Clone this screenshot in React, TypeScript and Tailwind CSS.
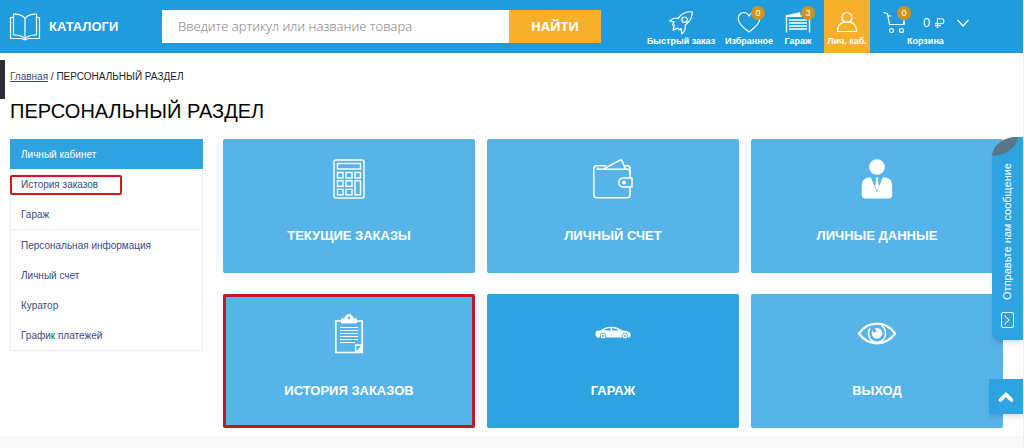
import React from 'react';

const font = "font-['Liberation_Sans',Arial,sans-serif]";

function BookIcon() {
  return (
    <svg className="w-8 h-7 shrink-0" viewBox="0 0 32 28" fill="none" stroke="currentColor" strokeWidth={1.2} strokeLinejoin="round">
      <path d="M16 5.5C13.5 2 9.5 1 4.5 1.2V22c5-.2 9 .8 11.5 3.8C18.5 22.8 22.5 21.8 27.5 22V1.2C22.5 1 18.5 2 16 5.5z" />
      <path d="M16 5.5V25.500" />
      <path d="M4.500 4.500H1.500V25.500h10c2 0 2.800.2 3.200 1.200h2.600c.4-1 1.200-1.200 3.200-1.200h10V4.500h-3" />
    </svg>
  );
}

function RocketIcon() {
  return (
    <svg className="w-6 h-6" viewBox="0 0 24 24" fill="none" stroke="currentColor" strokeWidth={1.2} strokeLinejoin="round">
      <path d="M23.300.8c-5.500-.4-9.600 1-12.600 4.700L9.300 7.300C6.400 6.600 3 7.500.8 10l4.400.8-1.700 3 1.800.3-1.200 5 4.600-2 1.500 1.700 2-1.200.6 5.300c2.700-2.200 3.900-5.300 3.400-8.600l2.300-2.300C21.600 9.200 23.300 5.600 23.300.8z" />
      <circle cx="15.5" cy="8.7" r="2.700" />
    </svg>
  );
}

function HeartIcon() {
  return (
    <svg className="w-6 h-6" viewBox="0 0 24 24" fill="none" stroke="currentColor" strokeWidth={1.2} strokeLinejoin="round">
      <path d="M12 21C7.500 17.800 1.500 13 1.200 7.800 1 4.200 3.500 1.500 6.700 1.500c2.300 0 4.200 1.300 5.300 3.500 1.100-2.200 3-3.500 5.300-3.500 3.200 0 5.700 2.700 5.500 6.300C22.500 13 16.500 17.800 12 21z" />
    </svg>
  );
}

function GarageIcon() {
  return (
    <svg className="w-[26px] h-6" viewBox="0 0 26 24" fill="none" stroke="currentColor">
      <path d="M1.500 21.500V5h23v16.500" strokeWidth={1.4} />
      <path d="M1 4.500 15 1.500V5.500H1z" fill="currentColor" strokeWidth={0.5} />
      <path d="M4 9h18M4 12h18M4 15h18M4 18h18" strokeWidth={1.5} />
    </svg>
  );
}

function UserIcon() {
  return (
    <svg className="w-6 h-6" viewBox="0 0 24 24" fill="none" stroke="currentColor" strokeWidth={1.2} strokeLinejoin="round">
      <circle cx="12" cy="6.5" r="5" />
      <path d="M2.500 20.500c0-5 2.700-8.300 6.200-9.300h6.600c3.500 1 6.200 4.300 6.200 9.300z" />
    </svg>
  );
}

function CartIcon() {
  return (
    <svg className="w-6 h-6" viewBox="0 0 24 24" fill="none" stroke="currentColor" strokeWidth={1.2} strokeLinejoin="round">
      <path d="M.5 1.500 4.500 2.500 6.500 13.500h14.500V11" />
      <path d="M4.900 5h3.500M21 6v7.500" />
      <circle cx="8.500" cy="19.500" r="2" />
      <circle cx="18.500" cy="19.500" r="2" />
    </svg>
  );
}

function CalculatorIcon() {
  return (
    <svg className="h-10 w-8" viewBox="0 0 32 40" fill="none" stroke="currentColor" strokeWidth={1.4}>
      <rect x="1" y="1" width="30" height="38" rx="2" />
      <rect x="4.5" y="4.5" width="23" height="5.5" />
      <rect x="4.5" y="13.5" width="5.5" height="5.5" />
      <rect x="13" y="13.5" width="6" height="5.5" />
      <rect x="22" y="13.5" width="5.5" height="5.5" />
      <rect x="4.5" y="21.8" width="5.5" height="5.5" />
      <rect x="13" y="21.8" width="6" height="5.5" />
      <rect x="22" y="21.8" width="5.5" height="14" />
      <rect x="4.5" y="30.3" width="5.5" height="5.5" />
      <rect x="13" y="30.3" width="6" height="5.5" />
    </svg>
  );
}

function WalletIcon() {
  return (
    <svg className="h-10 w-10" viewBox="0 0 40 40" fill="none" stroke="currentColor" strokeWidth={1.5} strokeLinejoin="round">
      <path d="M37 19V13c0-1.700-1-2.700-2.700-2.700H4.500V8.500M37 28v7.500c0 2-1.300 3.300-3.300 3.300H4C2 38.800.8 37.500.8 35.500V10C.8 8 2 6.800 4 6.800h9" />
      <path d="M10.500 10 27 1.200c1-.5 1.700-.2 2.100.8l3.400 8M31 6.800h3.500c1.500 0 2.500 1 2.500 2.700v5" />
      <path d="M39 19v9h-9c-2.500 0-4.200-2-4.200-4.500S27.500 19 30 19z" />
      <circle cx="31" cy="23.5" r="1.2" fill="currentColor" />
    </svg>
  );
}

function PersonIcon() {
  return (
    <svg className="h-10 w-8" viewBox="0 0 32 40" fill="currentColor">
      <circle cx="16" cy="8" r="7.8" />
      <path d="M10 18.500 15.800 33l6-14.500h2.700C29 19.300 31.200 22 31.200 27v9c0 2.200-1.200 3.500-3.500 3.500H4.300C2 39.500.8 38.200.8 36v-9c0-5 2.200-7.700 6.700-8.500z" />
      <path d="M14.300 18.800h3.400l-.7 2.500.9 6-1.900 4.200-1.900-4.200.9-6z" />
    </svg>
  );
}

function ClipboardIcon() {
  return (
    <svg className="h-10 w-8" viewBox="0 0 32 40" fill="none" stroke="currentColor">
      <path d="M8 7H2.800v31.500h26.400V7H24" strokeWidth={1.7} />
      <path d="M8.500 4.800h3.300C12.300 2 13.700.5 16 .5s3.700 1.500 4.200 4.300h3.300V9h-15z" fill="currentColor" />
      <circle cx="16" cy="4" r="1.2" fill="#57b4e8" stroke="none" />
      <path d="M7 13.500h18M7 16.500h18M7 19.500h18M7 22.500h18M7 25.500h18M7 28.500h15" strokeWidth={1.2} />
      <path d="M29 31h-6.500v7.500" strokeWidth={1.3} />
      <path d="M29 31.500 22.500 38.500H29z" fill="currentColor" />
    </svg>
  );
}

function CarIcon() {
  return (
    <svg className="h-10 w-9" viewBox="0 0 36 40" fill="currentColor">
      <path d="M.8 17.300 6.500 16c3-2.500 5.500-3.300 10-3.300 4.500 0 7.500 1.500 10.500 3.500 4.500.5 8 1.500 8.500 3.300v2.700l-1.500 1.300H2L.5 21.500z" />
      <path d="M8.500 16.300c1.800-1.500 3.700-2.100 6.900-2.100l.6 2.300zM17 14.200c3 .1 5 .9 6.800 2.300h-6.300z" fill="#2fa3e2" />
      <g stroke="#2fa3e2" strokeWidth={0.8}>
        <circle cx="8" cy="22" r="2.800" />
        <circle cx="30" cy="22" r="2.800" />
      </g>
      <g fill="#2fa3e2">
        <circle cx="8" cy="22" r="0.900" />
        <circle cx="30" cy="22" r="0.900" />
      </g>
    </svg>
  );
}

function EyeIcon() {
  return (
    <svg className="h-10 w-10" viewBox="0 0 40 40" fill="none" stroke="currentColor" strokeWidth={2.2}>
      <path d="M1.800 19.500C6.500 13.300 12.500 9.700 20 9.700s13.500 3.600 18.200 9.800C33.500 25.700 27.500 29.300 20 29.300S6.500 25.700 1.800 19.500z" strokeLinejoin="round" />
      <path d="M24.500 11.600c2.500 1.700 4 4.600 4 7.900 0 4.900-3.800 8.700-8.500 8.700s-8.500-3.800-8.500-8.700c0-2 .6-3.700 1.600-5.100" strokeWidth={1.6} />
      <circle cx="20" cy="19.3" r="5.2" fill="currentColor" stroke="none" />
      <circle cx="17.5" cy="16.8" r="1.7" fill="#57b4e8" stroke="none" />
    </svg>
  );
}

const navItems = [
  { label: 'Быстрый заказ', icon: <RocketIcon />, width: 'w-16' },
  { label: 'Избранное', icon: <HeartIcon />, badge: 0, width: 'w-[46px]' },
  { label: 'Гараж', icon: <GarageIcon />, badge: 3, width: 'w-[26px]' },
];

const menuGroups = [
  ['История заказов', 'Гараж'],
  ['Персональная информация', 'Личный счет', 'Куратор', 'График платежей'],
];

const tiles = [
  { label: 'ТЕКУЩИЕ ЗАКАЗЫ', icon: <CalculatorIcon /> },
  { label: 'ЛИЧНЫЙ СЧЕТ', icon: <WalletIcon /> },
  { label: 'ЛИЧНЫЕ ДАННЫЕ', icon: <PersonIcon /> },
  { label: 'ИСТОРИЯ ЗАКАЗОВ', icon: <ClipboardIcon />, marked: true },
  { label: 'ГАРАЖ', icon: <CarIcon />, active: true },
  { label: 'ВЫХОД', icon: <EyeIcon /> },
];

function Badge({ value }: { value: number }) {
  return (
    <span className="absolute -top-[5px] -right-1 flex size-[14px] items-center justify-center rounded-full bg-[#d0941d] text-[9px] leading-none font-normal text-white">
      {value}
    </span>
  );
}

function Header() {
  return (
    <header className="flex h-[53px] items-center bg-[#209cde] pl-[9px] text-white">
      <a href="#catalog" className="flex w-[153px] shrink-0 items-center gap-2 text-[13px] font-bold">
        <BookIcon />
        КАТАЛОГИ
      </a>

      {/* Search */}
      <form className="mr-12 flex h-[33px] min-w-0 flex-1">
        <input
          type="text"
          aria-label="Поиск"
          placeholder="Введите артикул или название товара"
          className="min-w-0 flex-1 bg-white px-4 font-['Open_Sans',sans-serif] text-[13px] font-light text-gray-700 outline-none placeholder:text-[#777777]"
        />
        <button type="button" className="w-[92px] bg-[#f6b02d] font-['Open_Sans',sans-serif] text-[13px] font-bold">
          НАЙТИ
        </button>
      </form>

      {/* User links */}
      <nav className="flex h-full shrink-0 text-[9px] leading-3 font-bold">
        {navItems.map((item) => (
          <a key={item.label} href="#nav" className={`mr-[13px] flex flex-col items-center pt-[11px] whitespace-nowrap ${item.width}`}>
            <span className="relative">
              {item.icon}
              {item.badge !== undefined && <Badge value={item.badge} />}
            </span>
            {item.label}
          </a>
        ))}
        <a href="#cabinet" className="flex w-[46px] flex-col items-center bg-[#f6b02d] pt-[11px] whitespace-nowrap">
          <UserIcon />
          Лич. каб.
        </a>
        <a href="#cart" className="flex w-[153px] flex-col pt-[11px] pl-[13px]">
          <span className="flex items-center">
            <span className="relative">
              <CartIcon />
              <Badge value={0} />
            </span>
            <span className="ml-4 flex items-center gap-[5px] text-[13px] font-normal">
              0
              <svg className="size-[10px]" viewBox="0 0 10 10" fill="none" stroke="currentColor" strokeWidth={1.1}>
                <path d="M2.500 10V.8H6.500a2.400 2.400 0 0 1 0 4.800H0M0 7.600H6" />
              </svg>
            </span>
            <svg className="ml-3 h-3 w-3" viewBox="0 0 12 12" fill="none" stroke="currentColor" strokeWidth={1.2}>
              <path d="M.5 3 6 9l5.500-6" />
            </svg>
          </span>
          <span className="pl-6">Корзина</span>
        </a>
      </nav>
    </header>
  );
}

function Sidebar() {
  return (
    <aside className="w-[193px] shrink-0 self-start border border-[#eeeeee] text-[10px] text-[#3c4a80]">
      <a href="#cabinet" className="-mx-px -mt-px flex h-[30px] items-center bg-[#2fa3e2] pl-[11px] text-white">
        Личный кабинет
      </a>
      {menuGroups.map((group, i) => (
        <ul key={i} className={i > 0 ? 'border-t border-[#eeeeee]' : ''}>
          {group.map((label) => (
            <li key={label} className="relative">
              <a href="#menu" className="flex h-[30px] items-center pl-[10px]">
                {label}
              </a>
              {label === 'История заказов' && (
                <span className="absolute top-1.5 -left-px h-5 w-28 rounded-xs border-2 border-[#dc141c]"></span>
              )}
            </li>
          ))}
        </ul>
      ))}
    </aside>
  );
}

export default function App() {
  return (
    <div className={`relative min-h-screen border-r border-[#f0f0f0] bg-white ${font}`}>
      <Header />

      <main className="pr-5 pb-2 pl-[10px]">
        <div className="pt-4 text-[10px] leading-4 text-[#222]">
          <a href="#home" className="text-[#3c4a80] underline">Главная</a> / ПЕРСОНАЛЬНЫЙ РАЗДЕЛ
        </div>
        <h1 className="mt-3 text-xl leading-7 text-black">ПЕРСОНАЛЬНЫЙ РАЗДЕЛ</h1>

        <div className="mt-[14px] flex gap-5">
          <Sidebar />
          <div className="grid flex-1 grid-cols-3 gap-x-3 gap-y-[21px]">
            {tiles.map((tile) => (
              <a
                key={tile.label}
                href="#tile"
                className={`relative flex h-[134px] flex-col items-center rounded-xs pt-5 text-[13px] leading-4 font-bold text-white ${tile.active ? 'bg-[#2fa3e2]' : 'bg-[#57b4e8]'}`}
              >
                {tile.icon}
                <span className="mt-[29px]">{tile.label}</span>
                {tile.marked && <span className="absolute inset-0 rounded-xs border-3 border-[#c0182a]"></span>}
              </a>
            ))}
          </div>
        </div>
      </main>

      <footer className="h-3 bg-[#f9f9f9]"></footer>

      {/* Floating widgets */}
      <div className="absolute top-[60px] left-0 h-[39px] w-[5px] bg-[#2d2c33]"></div>
      <button
        type="button"
        className="absolute top-[137px] right-0 flex h-[203px] w-[31px] flex-col items-center justify-end gap-3 rounded-tl-3xl rounded-bl-md bg-[#2fa3e2] pb-3 text-[11px] text-white shadow-md"
      >
        <svg className="absolute top-0 left-0 h-[19px] w-[26px]" viewBox="0 0 26 19" fill="#5a7688">
          <path d="M0 19C1 8 11 0 26 0 24 11 16 18 0 19z" />
        </svg>
        <span className="rotate-180 whitespace-nowrap [writing-mode:vertical-rl]">Отправьте нам сообщение</span>
        <svg className="h-4 w-[13px]" viewBox="0 0 13 16" fill="none" stroke="currentColor" strokeWidth={1}>
          <rect x="0.5" y="0.5" width="12" height="15" rx="1.5" />
          <path d="M4 3.500c0 2.500 4 3 4 4.500s-4 2-4 4.500" />
        </svg>
      </button>
      <button
        type="button"
        aria-label="Наверх"
        className="absolute top-[379px] right-0 flex h-[35px] w-[34px] items-center justify-center bg-[#2fa3e2] text-white shadow-md"
      >
        <svg className="h-3 w-4" viewBox="0 0 16 12" fill="none" stroke="currentColor" strokeWidth={3.6} strokeLinecap="round">
          <path d="M2.500 9 8 3.500l5.500 5.500" />
        </svg>
      </button>
    </div>
  );
}
